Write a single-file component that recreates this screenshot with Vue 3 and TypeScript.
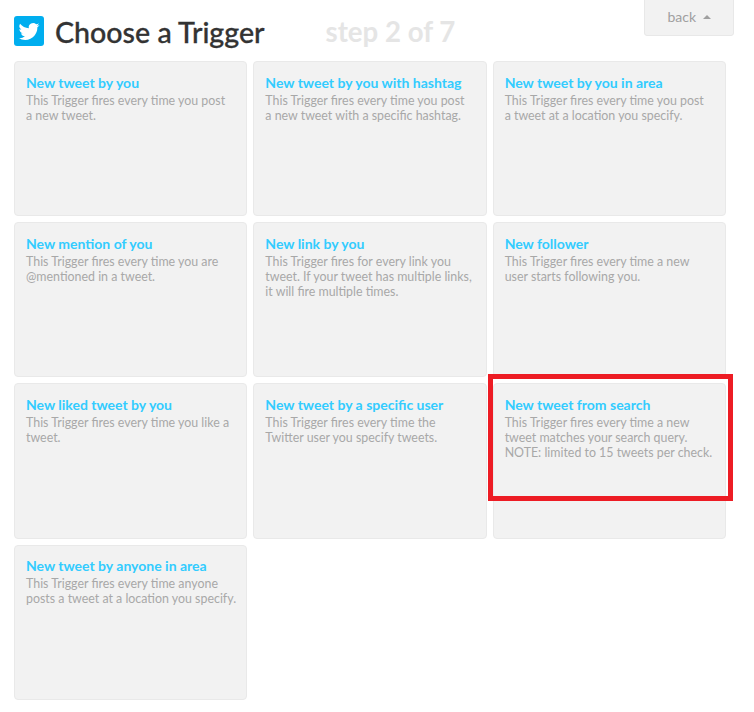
<template>
  <div class="page">
    <header class="header">
      <div class="logo">
        <svg viewBox="0 0 24 24" width="24" height="24">
          <path fill="#fff" d="M22.46 6c-.77.35-1.6.58-2.46.69a4.3 4.3 0 0 0 1.88-2.38c-.83.5-1.75.85-2.72 1.05a4.28 4.28 0 0 0-7.3 3.9A12.14 12.14 0 0 1 3.05 4.8a4.28 4.28 0 0 0 1.33 5.71c-.7-.02-1.37-.22-1.94-.53v.05a4.28 4.28 0 0 0 3.43 4.2c-.63.17-1.3.2-1.93.07a4.29 4.29 0 0 0 4 2.97A8.6 8.6 0 0 1 1.6 19.1a12.1 12.1 0 0 0 6.56 1.92c7.88 0 12.2-6.53 12.2-12.2l-.01-.55c.84-.6 1.56-1.36 2.11-2.27z" />
        </svg>
      </div>
      <h1 class="title">Choose a Trigger</h1>
      <span class="step">step 2 of 7</span>
      <button class="back">back <span class="caret"></span></button>
    </header>

    <div class="grid">
      <div v-for="item in triggers" :key="item.title" class="card">
        <div class="card-title">{{ item.title }}</div>
        <div class="card-text">{{ item.text }}</div>
      </div>
    </div>

    <div class="highlight"></div>
  </div>
</template>

<script setup lang="ts">
const triggers = [
  { title: 'New tweet by you', text: 'This Trigger fires every time you post\na new tweet.' },
  { title: 'New tweet by you with hashtag', text: 'This Trigger fires every time you post\na new tweet with a specific hashtag.' },
  { title: 'New tweet by you in area', text: 'This Trigger fires every time you post\na tweet at a location you specify.' },
  { title: 'New mention of you', text: 'This Trigger fires every time you are\n@mentioned in a tweet.' },
  { title: 'New link by you', text: 'This Trigger fires for every link you\ntweet. If your tweet has multiple links,\nit will fire multiple times.' },
  { title: 'New follower', text: 'This Trigger fires every time a new\nuser starts following you.' },
  { title: 'New liked tweet by you', text: 'This Trigger fires every time you like a\ntweet.' },
  { title: 'New tweet by a specific user', text: 'This Trigger fires every time the\nTwitter user you specify tweets.' },
  { title: 'New tweet from search', text: 'This Trigger fires every time a new\ntweet matches your search query.\nNOTE: limited to 15 tweets per check.' },
  { title: 'New tweet by anyone in area', text: 'This Trigger fires every time anyone\nposts a tweet at a location you specify.' },
]
</script>

<style>
html,
body {
  background: #fff;
}
</style>

<style scoped>
.page {
  position: relative;
  width: 754px;
  height: 712px;
  overflow: hidden;
  font-family: Lato, "Liberation Sans", sans-serif;
}

.header {
  position: relative;
  display: flex;
  align-items: center;
  height: 61px;
  padding: 0 0 0 14px;
  box-sizing: border-box;
}

.logo {
  display: flex;
  align-items: center;
  justify-content: center;
  width: 30px;
  height: 30px;
  margin-top: 1px;
  border-radius: 3px;
  background: #00aeef;
}

.title {
  margin: 2px 0 0 11px;
  font-size: 28.6px;
  font-weight: 500;
  color: #333;
  -webkit-text-stroke: 0.3px #333;
}

.step {
  margin: 2px 0 0 61px;
  font-size: 27.6px;
  font-weight: 700;
  color: #e5e5e5;
}

.back {
  position: absolute;
  top: -2px;
  left: 644px;
  width: 90px;
  height: 38px;
  padding: 0 0 2px;
  border: 1px solid #e8e8e8;
  border-radius: 0 0 3px 3px;
  background: #f2f2f2;
  font-family: inherit;
  font-size: 14px;
  color: #a0a0a0;
}

.caret {
  display: inline-block;
  margin-left: 3px;
  vertical-align: 3px;
  border-left: 4px solid transparent;
  border-right: 4px solid transparent;
  border-bottom: 4px solid #a0a0a0;
}

.grid {
  display: grid;
  grid-template-columns: repeat(3, minmax(0, 1fr));
  grid-auto-rows: 155.2px;
  gap: 6px;
  width: 712px;
  margin-left: 14px;
}

.card {
  padding: 11.8px 11px;
  border: 1px solid #e9e9e9;
  border-radius: 4px;
  background: #f2f2f2;
}

.card-title {
  font-size: 14px;
  line-height: 18px;
  font-weight: 700;
  color: #33ccff;
}

.card-text {
  margin-top: 1px;
  font-size: 12.4px;
  line-height: 15px;
  white-space: pre;
  color: #a8a8a8;
}

.highlight {
  position: absolute;
  top: 374px;
  left: 488px;
  width: 245px;
  height: 127px;
  box-sizing: border-box;
  border: 5px solid #ed1c24;
}
</style>
